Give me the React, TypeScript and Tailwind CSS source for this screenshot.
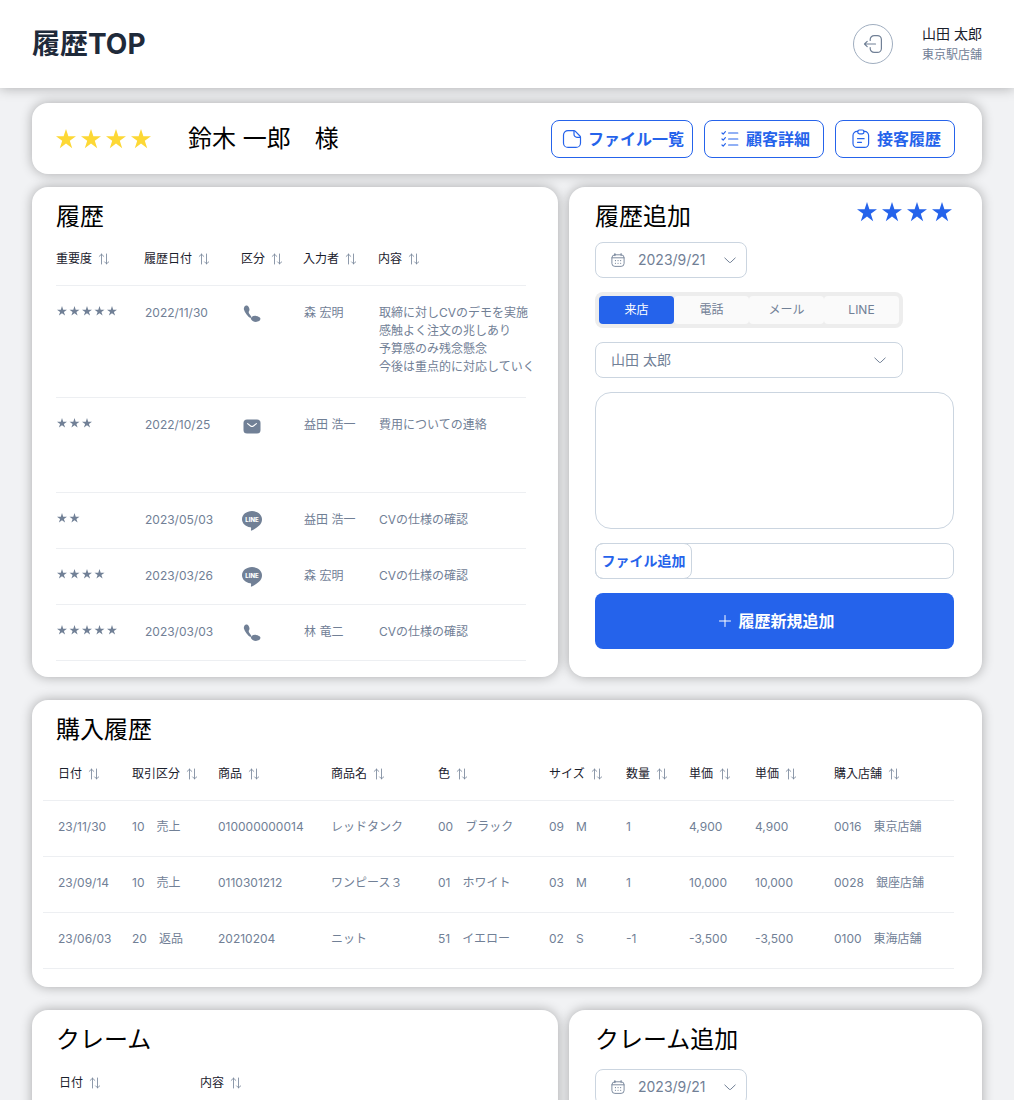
import React, { useState } from 'react';
import clsx from 'clsx';

type Channel = 'phone' | 'mail' | 'line';

interface HistoryRow {
  rank: number;
  date: string;
  channel: Channel;
  author: string;
  lines: string[];
  height: string;
}

const historyRows: HistoryRow[] = [
  {
    rank: 5,
    date: '2022/11/30',
    channel: 'phone',
    author: '森 宏明',
    lines: ['取締に対しCVのデモを実施', '感触よく注文の兆しあり', '予算感のみ残念懸念', '今後は重点的に対応していく'],
    height: 'h-28',
  },
  { rank: 3, date: '2022/10/25', channel: 'mail', author: '益田 浩一', lines: ['費用についての連絡'], height: 'h-[95px]' },
  { rank: 2, date: '2023/05/03', channel: 'line', author: '益田 浩一', lines: ['CVの仕様の確認'], height: 'h-14' },
  { rank: 4, date: '2023/03/26', channel: 'line', author: '森 宏明', lines: ['CVの仕様の確認'], height: 'h-14' },
  { rank: 5, date: '2023/03/03', channel: 'phone', author: '林 竜二', lines: ['CVの仕様の確認'], height: 'h-14' },
];

const historyColumns = [
  { label: '重要度', width: 'w-[88px]' },
  { label: '履歴日付', width: 'w-[97px]' },
  { label: '区分', width: 'w-[62px]' },
  { label: '入力者', width: 'w-[75px]' },
  { label: '内容', width: '' },
];

const purchaseColumns = [
  { label: '日付', width: 'w-[89px]' },
  { label: '取引区分', width: 'w-[86px]' },
  { label: '商品', width: 'w-[113px]' },
  { label: '商品名', width: 'w-[107px]' },
  { label: '色', width: 'w-[111px]' },
  { label: 'サイズ', width: 'w-[77px]' },
  { label: '数量', width: 'w-[63px]' },
  { label: '単価', width: 'w-[66px]' },
  { label: '単価', width: 'w-[79px]' },
  { label: '購入店舗', width: '' },
];

const purchaseRows = [
  ['23/11/30', '10　売上', '010000000014', 'レッドタンク', '00　ブラック', '09　M', '1', '4,900', '4,900', '0016　東京店舗'],
  ['23/09/14', '10　売上', '0110301212', 'ワンピース３', '01　ホワイト', '03　M', '1', '10,000', '10,000', '0028　銀座店舗'],
  ['23/06/03', '20　返品', '20210204', 'ニット', '51　イエロー', '02　S', '-1', '-3,500', '-3,500', '0100　東海店舗'],
];

const channels = ['来店', '電話', 'メール', 'LINE'];

function Stars({ count, className }: { count: number; className: string }) {
  return (
    <svg viewBox={`0 0 ${count * 25 - 5} 20`} fill="currentColor" className={clsx('w-auto', className)} role="img" aria-label={`重要度 ${count}`}>
      {Array.from({ length: count }, (_, i) => (
        <path
          key={i}
          transform={`translate(${i * 25} 0)`}
          d="M10 0 12.4 7.300H20L13.800 11.800 16.200 19.200 10 14.600 3.800 19.200 6.200 11.800 0 7.300H7.600Z"
        />
      ))}
    </svg>
  );
}

function SortIcon() {
  return (
    <svg width="12" height="12" viewBox="0 0 12 12" fill="none" stroke="#718096" strokeWidth="0.8" strokeLinecap="round" strokeLinejoin="round">
      <path d="M3.500 11V1.200M1.200 3.400 3.500 1.200 5.800 3.400" />
      <path d="M8.500 1v9.800M6.600 8.900l1.900 1.900 2.200-1.900" />
    </svg>
  );
}

function ChevronIcon({ className }: { className: string }) {
  return (
    <svg width="14" height="14" viewBox="0 0 14 14" fill="none" stroke="#718096" strokeLinecap="round" strokeLinejoin="round" className={className}>
      <path d="M1.8 5 6.3 9.3Q7 9.9 7.7 9.3L12.2 5" />
    </svg>
  );
}

function CalendarIcon({ className }: { className: string }) {
  return (
    <svg width="14" height="14" viewBox="0 0 14 14" fill="none" stroke="#718096" strokeWidth="0.9" strokeLinecap="round" className={className}>
      <rect x="0.9" y="1.8" width="12.2" height="11.6" rx="3" />
      <path d="M1 4.800h12M3.9.5v2.2M10.1.5v2.2" />
      <path d="M4.4 7.6h.1M7 7.6h.1M9.6 7.6h.1M4.4 10.2h.1M7 10.2h.1M9.6 10.2h.1" strokeWidth="1.1" />
    </svg>
  );
}

function LogoutIcon() {
  return (
    <svg width="20" height="20" viewBox="0 0 20 20" fill="none" stroke="#718096" strokeWidth="1.2" strokeLinecap="round" strokeLinejoin="round">
      <path d="M7.2 6.4V5.6a4 4 0 0 1 4-4h3.2a4 4 0 0 1 4 4v8.8a4 4 0 0 1-4 4h-3.2a4 4 0 0 1-4-4v-.8" />
      <path d="M12.5 10H1.7M4.2 7.3 1.5 10l2.7 2.7" />
    </svg>
  );
}

function FileIcon() {
  return (
    <svg width="20" height="20" viewBox="0 0 20 20" fill="none" stroke="currentColor" strokeWidth="1.2" strokeLinejoin="round">
      <path d="M11.700 1.600H6a4.500 4.500 0 0 0-4.500 4.500v7.800A4.500 4.500 0 0 0 6 18.400h8a4.500 4.500 0 0 0 4.500-4.500V8.400a2 2 0 0 0-.6-1.400l-4.700-4.800a2 2 0 0 0-1.500-.6Z" />
      <path d="M12 1.700v3.600a3 3 0 0 0 3 3h3.400" />
    </svg>
  );
}

function ChecklistIcon() {
  return (
    <svg width="20" height="20" viewBox="0 0 20 20" fill="none" stroke="currentColor" strokeWidth="1.2" strokeLinecap="round" strokeLinejoin="round">
      <path d="M8.6 4h9.2M8.6 10h9.2M8.6 16h9.2" />
      <path d="m2 4 1.200 1.100L5.400 2.700M2 10l1.200 1.100L5.400 8.700M2 16l1.200 1.100 2.200-2.400" />
    </svg>
  );
}

function ClipboardIcon() {
  return (
    <svg width="20" height="20" viewBox="0 0 20 20" fill="none" stroke="currentColor" strokeWidth="1.2" strokeLinecap="round">
      <path d="M6.700 2.400H6a4 4 0 0 0-4 4v8a4 4 0 0 0 4 4h7.600a4 4 0 0 0 4-4v-8a4 4 0 0 0-4-4H13" />
      <rect x="6.700" y="1" width="6.300" height="3.800" rx="1.700" />
      <path d="M6.500 9.700h6.600M6.500 13.300h4" />
    </svg>
  );
}

function ChannelIcon({ channel }: { channel: Channel }) {
  if (channel === 'line') {
    return (
      <svg width="20" height="20" viewBox="0 0 20 20" fill="currentColor">
        <path d="M10 0C4.500 0 0 3.600 0 8.200c0 4 3.500 7.400 8.300 8 .8.200.9.600.8 1.300l-.2 1.400c-.1.700.3.900.9.6 2.600-1.300 6.500-3.800 8.400-6.100C19.500 11.900 20 10.200 20 8.200 20 3.600 15.500 0 10 0Z" />
        <text x="10" y="10.500" textAnchor="middle" fill="#fff" fontSize="6" fontWeight="800">LINE</text>
      </svg>
    );
  }
  if (channel === 'mail') {
    return (
      <svg width="20" height="20" viewBox="0 0 20 20" role="img" aria-label="メール">
        <rect x="1.500" y="3.500" width="17" height="14" rx="3.500" fill="currentColor" />
        <path d="M5.600 7.600 8.600 10q1.400.9 2.800 0l3-2.400" fill="none" stroke="#fff" strokeWidth="1.2" strokeLinecap="round" />
      </svg>
    );
  }
  return (
    <svg width="20" height="20" viewBox="0 0 20 20" fill="currentColor" role="img" aria-label="電話">
      <path d="M2.300 3C2.900 1.800 4 1.300 5 1.600c1.300.4 2.400 2.300 2.500 4 .1 1.200-.8 1.900-.8 2.700 0 1.100 1.700 3.100 2.600 4.200-.5.500-.7 1.300-.3 2.100C5.500 12.300 2.600 8.500 1.900 5.500c-.2-.9 0-1.800.4-2.500Z" />
      <path d="M9.600 12.900c1.200-.9 2.900-1.300 4.500-1 2 .3 4 1.200 4.300 2.500.4 1.700-1.700 3.500-4.600 3.500-1.900 0-3.700-1-4.600-2.400-.4-.8-.4-1.900.4-2.600Z" />
    </svg>
  );
}

function Card({ className, children }: { className?: string; children: React.ReactNode }) {
  return <section className={clsx('rounded-2xl bg-white shadow-[0_0_12px_rgba(0,0,0,0.3)]', className)}>{children}</section>;
}

function CardTitle({ children }: { children: React.ReactNode }) {
  return <h2 className="text-2xl leading-9 text-black">{children}</h2>;
}

function HeadCell({ label, className }: { label: string; className?: string }) {
  return (
    <th scope="col" className={clsx('pb-[17px] text-left align-top font-normal text-[#1a202c]', className)}>
      <button type="button" className="flex items-center gap-1.5 whitespace-nowrap">
        {label}
        <SortIcon />
      </button>
    </th>
  );
}

function DateSelect({ label }: { label: string }) {
  return (
    <div className="relative w-[152px]">
      <select
        aria-label={label}
        className="h-9 w-full appearance-none rounded-lg border border-[#cbd5e0] bg-white pl-[42px] text-sm text-[#718096]"
      >
        <option>2023/9/21</option>
      </select>
      <CalendarIcon className="pointer-events-none absolute top-[11px] left-4" />
      <ChevronIcon className="pointer-events-none absolute top-[11px] right-[10px]" />
    </div>
  );
}

function ActionButton({ icon, className, children }: { icon: React.ReactNode; className: string; children: React.ReactNode }) {
  return (
    <button
      type="button"
      className={clsx(
        'flex h-[38px] items-center justify-center gap-1.5 rounded-lg border border-[#2563eb] pl-0.5 font-semibold whitespace-nowrap text-[#2563eb]',
        className
      )}
    >
      {icon}
      {children}
    </button>
  );
}

function HistoryTable() {
  return (
    <table className="mt-[15px] w-full table-fixed border-collapse text-xs leading-[18px] text-[#718096]">
      <thead>
        <tr className="border-b border-[#edeff2]">
          {historyColumns.map((col) => (
            <HeadCell key={col.label} label={col.label} className={col.width} />
          ))}
        </tr>
      </thead>
      <tbody>
        {historyRows.map((row) => (
          <tr key={row.date} className={clsx('border-b border-[#edeff2] align-top', row.height)}>
            <td className="pt-5 pl-px">
              <Stars count={row.rank} className="h-[10px]" />
            </td>
            <td className="pt-[18px] pl-px">{row.date}</td>
            <td className="pt-[18px] pl-px">
              <ChannelIcon channel={row.channel} />
            </td>
            <td className="pt-[18px] pl-px">{row.author}</td>
            <td className="pt-[18px] pl-px whitespace-nowrap">
              {row.lines.map((line) => (
                <p key={line}>{line}</p>
              ))}
            </td>
          </tr>
        ))}
      </tbody>
    </table>
  );
}

function HistoryForm() {
  const [channel, setChannel] = useState(channels[0]);

  return (
    <form className="mt-[7px] flex flex-col gap-[14px]" onSubmit={(e) => e.preventDefault()}>
      <DateSelect label="履歴日付" />
      <div role="radiogroup" aria-label="区分" className="flex h-9 w-[308px] rounded-lg bg-[#ededed] p-1">
        {channels.map((name) => (
          <label
            key={name}
            className={clsx(
              'flex flex-1 cursor-pointer items-center justify-center rounded text-xs',
              channel === name ? 'bg-[#2563eb] text-white' : 'bg-[#fafafa] text-[#718096]'
            )}
          >
            <input
              type="radio"
              name="channel"
              className="size-0 appearance-none"
              checked={channel === name}
              onChange={() => setChannel(name)}
            />
            {name}
          </label>
        ))}
      </div>
      <div className="relative w-[308px]">
        <select
          aria-label="入力者"
          className="h-9 w-full appearance-none rounded-lg border border-[#cbd5e0] bg-white pl-[15px] text-sm text-[#718096]"
        >
          <option>山田 太郎</option>
        </select>
        <ChevronIcon className="pointer-events-none absolute top-[11px] right-4" />
      </div>
      <textarea aria-label="内容" className="h-[137px] resize-none rounded-2xl border border-[#cbd5e0] p-3 text-sm" />
      <div className="flex h-9 rounded-lg border border-[#cbd5e0]">
        <button type="button" className="-my-px -ml-px w-[97px] rounded-lg border border-[#cbd5e0] text-sm font-semibold text-[#2563eb]">
          ファイル追加
        </button>
      </div>
      <button
        type="submit"
        className="flex h-14 items-center justify-center gap-1.5 rounded-lg bg-[#2563eb] pl-1 font-semibold text-white"
      >
        <svg width="14" height="14" viewBox="0 0 14 14" stroke="currentColor" strokeLinecap="round">
          <path d="M7 1.500v11M1.500 7h11" />
        </svg>
        履歴新規追加
      </button>
    </form>
  );
}

function PurchaseTable() {
  return (
    <table className="mt-[17px] w-full table-fixed border-collapse text-xs leading-[18px] text-[#718096]">
      <thead>
        <tr className="border-b border-[#edeff2]">
          {purchaseColumns.map((col, i) => (
            <HeadCell key={i} label={col.label} className={clsx(col.width, i === 0 && 'pl-[15px]')} />
          ))}
        </tr>
      </thead>
      <tbody>
        {purchaseRows.map((row) => (
          <tr key={row[0]} className="h-14 border-b border-[#edeff2] align-top">
            {row.map((cell, i) => (
              <td key={i} className={clsx('pt-[17px] whitespace-nowrap', i === 0 && 'pl-[15px]')}>
                {cell}
              </td>
            ))}
          </tr>
        ))}
      </tbody>
    </table>
  );
}

export default function App() {
  return (
    <div className="min-h-screen bg-[#f1f2f4] font-['Inter','Noto_Sans_CJK_JP',sans-serif]" lang="ja">
      <header className="flex h-[88px] items-center justify-between bg-white px-8 shadow-[0_0_12px_rgba(0,0,0,0.3)]">
        <h1 className="text-[28px] leading-10 font-bold text-[#1f2a3a]">履歴TOP</h1>
        <div className="flex items-center gap-[29px]">
          <button
            type="button"
            aria-label="ログアウト"
            className="flex size-10 items-center justify-center rounded-full border border-[#a0aec0]"
          >
            <LogoutIcon />
          </button>
          <div className="flex flex-col gap-px">
            <p className="text-sm leading-5 text-[#1a202c]">山田 太郎</p>
            <p className="text-xs leading-5 text-[#718096]">東京駅店舗</p>
          </div>
        </div>
      </header>

      <main className="px-8 pt-[15px]">
        <Card className="flex h-[71px] items-center pr-[27px] pl-6">
          <Stars count={4} className="h-5 text-[#fdd835]" />
          <p className="ml-[37px] text-2xl text-black">鈴木 一郎　様</p>
          <div className="ml-auto flex gap-[11px]">
            <ActionButton icon={<FileIcon />} className="w-[142px]">ファイル一覧</ActionButton>
            <ActionButton icon={<ChecklistIcon />} className="w-[120px]">顧客詳細</ActionButton>
            <ActionButton icon={<ClipboardIcon />} className="w-[120px]">接客履歴</ActionButton>
          </div>
        </Card>

        <div className="mt-[13px] grid grid-cols-[526fr_413fr] gap-[11px]">
          <Card className="pt-3 pr-8 pb-4 pl-6">
            <CardTitle>履歴</CardTitle>
            <HistoryTable />
          </Card>
          <Card className="pt-3 pr-7 pb-7 pl-[26px]">
            <div className="flex justify-between pr-0.5">
              <CardTitle>履歴追加</CardTitle>
              <Stars count={4} className="mt-[3px] h-5 text-[#2563eb]" />
            </div>
            <HistoryForm />
          </Card>
        </div>

        <Card className="mt-[23px] pt-3 pr-7 pb-[18px] pl-[11px]">
          <div className="pl-[13px]">
            <CardTitle>購入履歴</CardTitle>
          </div>
          <PurchaseTable />
        </Card>

        <div className="mt-[23px] grid grid-cols-[526fr_413fr] gap-[11px]">
          <Card className="pt-3 pr-8 pb-4 pl-6">
            <CardTitle>クレーム</CardTitle>
            <table className="mt-4 w-full table-fixed border-collapse text-xs leading-[18px]">
              <thead>
                <tr className="border-b border-[#edeff2]">
                  <HeadCell label="日付" className="w-36 pl-[3px]" />
                  <HeadCell label="内容" />
                </tr>
              </thead>
            </table>
          </Card>
          <Card className="pt-3 pr-7 pb-7 pl-[26px]">
            <CardTitle>クレーム追加</CardTitle>
            <div className="mt-[11px]">
              <DateSelect label="クレーム日付" />
            </div>
          </Card>
        </div>
      </main>
    </div>
  );
}
